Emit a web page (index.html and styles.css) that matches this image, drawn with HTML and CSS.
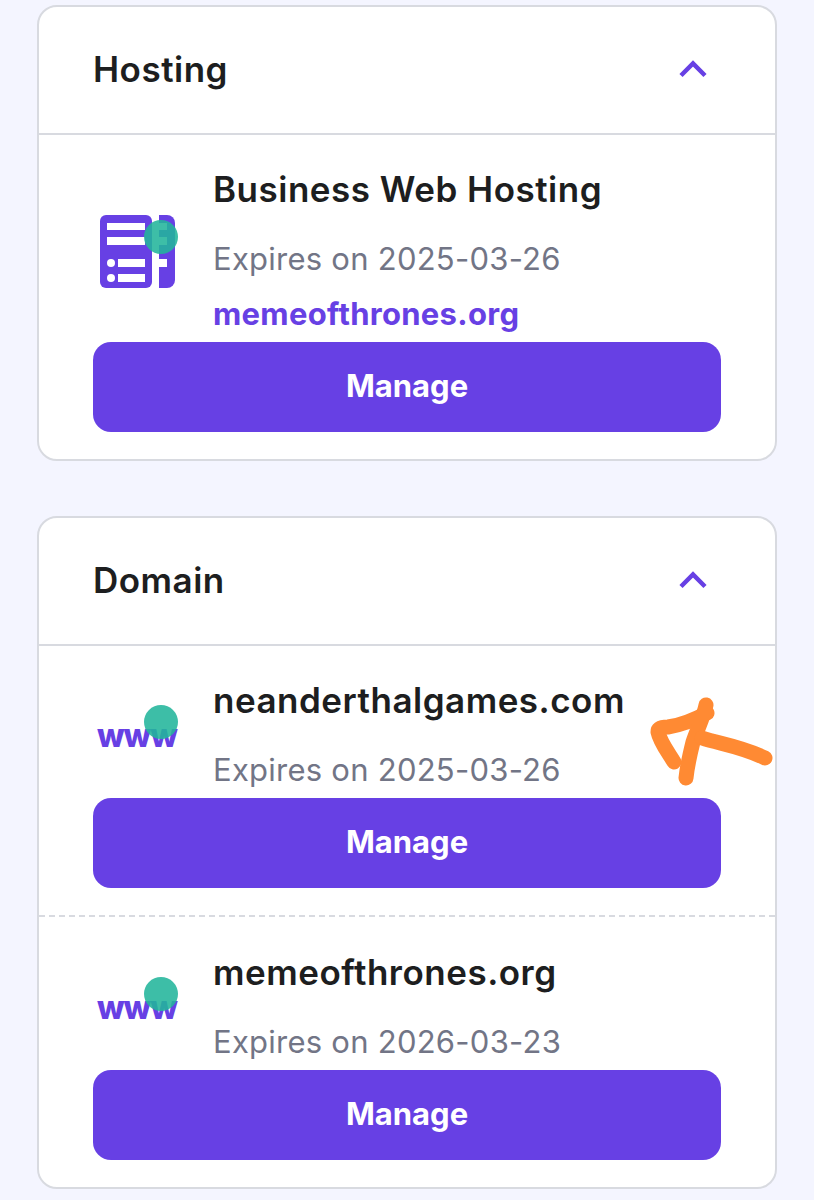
FILE: index.html
```html
<!DOCTYPE html>
<html lang="en">
<head>
    <meta charset="UTF-8">
    <meta name="viewport" content="width=device-width, initial-scale=1.0">
    <title>Hosting and domains</title>
    <link rel="stylesheet" href="styles.css">
</head>
<body>
    <!-- Hosting card -->
    <section class="card">
        <header class="card-head">
            <h2>Hosting</h2>
            <svg class="chevron" viewBox="0 0 30 18"><path d="M3 15.500 15 3.500 27 15.500"/></svg>
        </header>
        <div class="item">
            <div class="item-row">
                <svg class="item-icon" viewBox="0 0 80 80">
                    <rect x="1" y="2" width="52" height="73" rx="6" fill="#6740e4"/>
                    <path d="M60 2h8a8 8 0 0 1 8 8v57a8 8 0 0 1-8 8h-8z" fill="#6740e4"/>
                    <rect x="8" y="10" width="38" height="7" fill="#fff"/>
                    <rect x="8" y="24" width="38" height="8" fill="#fff"/>
                    <circle cx="12" cy="50" r="4" fill="#fff"/>
                    <rect x="19" y="46" width="27" height="8" fill="#fff"/>
                    <circle cx="12" cy="65" r="4" fill="#fff"/>
                    <rect x="19" y="61" width="27" height="8" fill="#fff"/>
                    <rect x="60" y="10" width="8" height="7" fill="#fff"/>
                    <rect x="60" y="24" width="8" height="8" fill="#fff"/>
                    <rect x="60" y="46" width="8" height="8" fill="#fff"/>
                    <circle cx="62" cy="24" r="17" fill="#22b59b" fill-opacity="0.88"/>
                </svg>
                <div class="item-text">
                    <div class="item-title">Business Web Hosting</div>
                    <div class="item-expiry">Expires on 2025-03-26</div>
                    <a class="item-link" href="#">memeofthrones.org</a>
                </div>
            </div>
            <button class="manage">Manage</button>
        </div>
    </section>

    <!-- Domain card -->
    <section class="card">
        <header class="card-head">
            <h2>Domain</h2>
            <svg class="chevron" viewBox="0 0 30 18"><path d="M3 15.500 15 3.500 27 15.500"/></svg>
        </header>
        <div class="item">
            <div class="item-row">
                <div class="www-icon"><span class="www-text">www</span><span class="www-dot"></span></div>
                <div class="item-text">
                    <div class="item-title">neanderthalgames.com</div>
                    <div class="item-expiry">Expires on 2025-03-26</div>
                </div>
            </div>
            <button class="manage">Manage</button>
        </div>
        <div class="item item-dashed">
            <div class="item-row">
                <div class="www-icon"><span class="www-text">www</span><span class="www-dot"></span></div>
                <div class="item-text">
                    <div class="item-title">memeofthrones.org</div>
                    <div class="item-expiry">Expires on 2026-03-23</div>
                </div>
            </div>
            <button class="manage">Manage</button>
        </div>
    </section>

    <!-- Hand drawn arrow on top of the screenshot -->
    <svg class="scribble" viewBox="0 0 150 120">
        <path d="M34 82C28 72 20 62 18 52C18 48 22 47 28 47C42 45 54 40 67 33"/>
        <path d="M66 25C64 36 57 50 53 62C50 74 47 88 46 98"/>
        <path d="M62 58C80 64 100 66 125 78"/>
    </svg>
</body>
</html>
```

FILE: styles.css
```css
/* Basic reset */
* {
    margin: 0;
    padding: 0;
    box-sizing: border-box;
}

body {
    font-family: Inter, "Open Sans", sans-serif;
    background-color: #f4f5ff;
    color: #1d1e20;
    padding: 5px 37px 12px;
    display: flex;
    flex-direction: column;
    gap: 55px;
    position: relative;
}

.card {
    background-color: #fff;
    border: 2px solid #d8dae0;
    border-radius: 20px;
}

.card-head {
    height: 128px;
    padding: 0 54px 2px;
    display: flex;
    align-items: center;
    justify-content: space-between;
    border-bottom: 2px solid #d8dae0;
}

.card-head h2 {
    font-size: 35px;
    font-weight: 600;
    letter-spacing: 0.500px;
}

.chevron {
    width: 30px;
    height: 18px;
    margin-right: 13px;
    fill: none;
    stroke: #6740e4;
    stroke-width: 4.500;
}

.item {
    padding: 32px 54px 27px;
}

.item-dashed {
    border-top: 2px dashed #d8dae0;
    padding-top: 33px;
}

.item-row {
    display: flex;
    align-items: center;
}

.item-icon {
    width: 80px;
    height: 80px;
    margin-top: 4px;
    margin-left: 6px;
    margin-right: 34px;
    flex-shrink: 0;
}

.www-icon {
    position: relative;
    width: 84px;
    height: 50px;
    margin-left: 4px;
    margin-right: 32px;
    flex-shrink: 0;
}

.www-dot {
    position: absolute;
    left: 47px;
    top: -4px;
    width: 34px;
    height: 34px;
    border-radius: 50%;
    background-color: rgba(34, 181, 155, 0.88);
}

.www-text {
    position: absolute;
    left: 0;
    top: 7px;
    font-size: 32px;
    font-weight: 800;
    line-height: 40px;
    letter-spacing: -1px;
    color: #6740e4;
}

.item-text {
    display: flex;
    flex-direction: column;
}

.item-title {
    font-size: 35px;
    font-weight: 600;
    line-height: 44px;
    letter-spacing: 0.500px;
}

.item-expiry {
    font-size: 31px;
    line-height: 40px;
    margin-top: 28px;
    letter-spacing: 0.250px;
    color: #727586;
}

.item-link {
    font-size: 31px;
    font-weight: 700;
    line-height: 41px;
    margin-top: 14px;
    letter-spacing: 0.300px;
    color: #6740e4;
    text-decoration: none;
}

.manage {
    display: block;
    width: 100%;
    height: 90px;
    margin-top: 8px;
    padding-bottom: 4px;
    font-family: inherit;
    font-size: 31px;
    font-weight: 700;
    color: #fff;
    background-color: #6740e4;
    border: none;
    border-radius: 18px;
    cursor: pointer;
}

.scribble {
    position: absolute;
    left: 640px;
    top: 680px;
    width: 150px;
    height: 120px;
    fill: none;
    stroke: #ff8a33;
    stroke-width: 15;
    stroke-linecap: round;
    stroke-linejoin: round;
}
```
